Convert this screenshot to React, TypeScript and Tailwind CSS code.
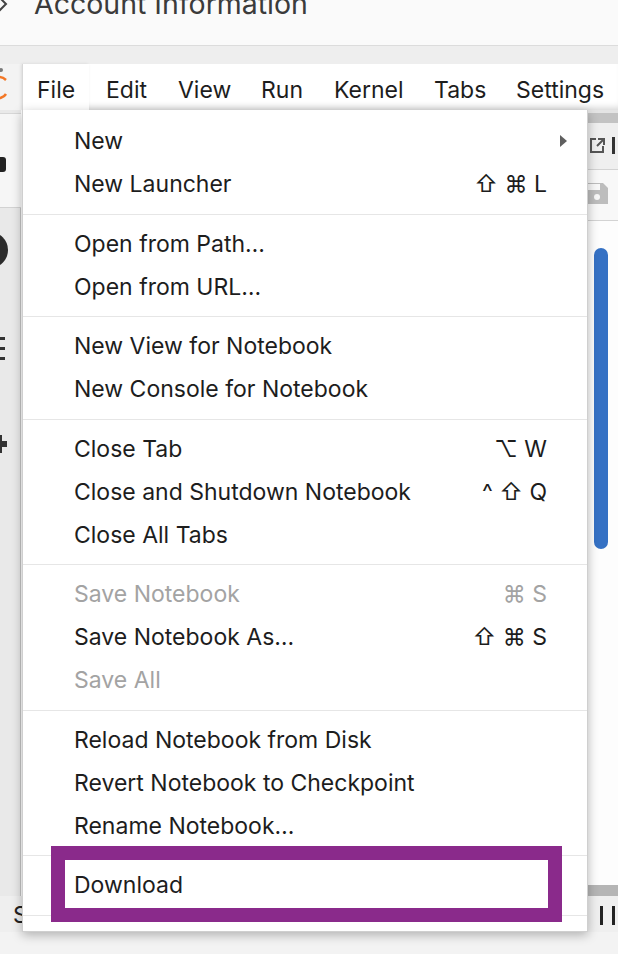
import React from 'react'

type Item = { label: string; shortcut?: string; disabled?: boolean; submenu?: boolean; marked?: boolean }

const groups: Item[][] = [
  [{ label: 'New', submenu: true }, { label: 'New Launcher', shortcut: '⇧ ⌘ L' }],
  [{ label: 'Open from Path…' }, { label: 'Open from URL…' }],
  [{ label: 'New View for Notebook' }, { label: 'New Console for Notebook' }],
  [
    { label: 'Close Tab', shortcut: '⌥ W' },
    { label: 'Close and Shutdown Notebook', shortcut: '^ ⇧ Q' },
    { label: 'Close All Tabs' },
  ],
  [
    { label: 'Save Notebook', shortcut: '⌘ S', disabled: true },
    { label: 'Save Notebook As…', shortcut: '⇧ ⌘ S' },
    { label: 'Save All', disabled: true },
  ],
  [
    { label: 'Reload Notebook from Disk' },
    { label: 'Revert Notebook to Checkpoint' },
    { label: 'Rename Notebook…' },
  ],
  [{ label: 'Download', marked: true }],
]

const menus = [
  { label: 'File', w: 'w-[67px] pl-[14px]', active: true },
  { label: 'Edit', w: 'w-[73px] pl-[17px]' },
  { label: 'View', w: 'w-[83px] pl-[16px]' },
  { label: 'Run', w: 'w-[73px] pl-[16px]' },
  { label: 'Kernel', w: 'w-[100px] pl-[16px]' },
  { label: 'Tabs', w: 'w-[82px] pl-[16px]' },
  { label: 'Settings', w: 'w-[110px] pl-[16px]' },
]

function Separator() {
  return (
    <div className="flex h-[16.5px] items-center">
      <div className="h-px w-full bg-[#e6e6e6]" />
    </div>
  )
}

function MenuRow({ item }: { item: Item }) {
  return (
    <div
      className={`relative flex h-[43px] items-center pl-[51px] pr-[40px] ${
        item.disabled ? 'text-[#a3a3a3]' : 'text-[#1d1d1d]'
      }`}
    >
      <span className="flex-1">{item.label}</span>
      {item.shortcut && <span className="font-['Inter','DejaVu_Sans',sans-serif]">{item.shortcut}</span>}
      {item.submenu && (
        <svg className="absolute right-[20px] top-[15px]" width="7" height="12" viewBox="0 0 7 12">
          <polygon points="0,0 7,6 0,12" fill="#5f5f5f" />
        </svg>
      )}
      {item.marked && (
        <div className="absolute left-[28px] top-[-18px] h-[76px] w-[511px] border-[14px] border-[#8a2a8b]" />
      )}
    </div>
  )
}

function FileMenu() {
  return (
    <div className="absolute left-[22px] top-[110px] z-20 h-[822px] w-[566px] overflow-hidden border border-t-0 border-[#cfcfcf] bg-white pt-[10px] text-[23px] shadow-[0_3px_10px_rgba(0,0,0,0.28)]">
      {groups.map((group, gi) => (
        <div key={gi}>
          {gi > 0 && <Separator />}
          {group.map((item) => (
            <MenuRow key={item.label} item={item} />
          ))}
        </div>
      ))}
      <Separator />
    </div>
  )
}

function SidebarIcons() {
  return (
    <svg width="21" height="786" viewBox="0 0 21 786" className="block">
      <rect x="0" y="3" width="21" height="1" fill="#d6d6d6" />
      <rect x="0" y="4" width="21" height="93" fill="#f6f6f6" />
      <rect x="-8" y="47" width="14" height="15" rx="3" fill="#222" />
      <rect x="0" y="97" width="21" height="1" fill="#d2d2d2" />
      <circle cx="-10" cy="140" r="18" fill="#2b2b2b" />
      <rect x="0" y="227" width="5" height="3" fill="#333" />
      <rect x="0" y="237" width="5" height="3" fill="#333" />
      <rect x="0" y="247" width="5" height="3" fill="#333" />
      <path d="M-4 325 h6 v6 h5 v6 h-5 v6 h-6 z" fill="#333" />
      <rect x="20" y="98" width="1" height="688" fill="#c4c4c4" />
    </svg>
  )
}

export default function App() {
  return (
    <div className="relative h-[954px] w-[618px] overflow-hidden bg-[#f3f3f3] font-['Inter','Liberation_Sans',sans-serif]">
      {/* top header, its title cut by the window edge */}
      <div className="h-[46px] overflow-hidden border-b border-[#dcdcdc] bg-[#fafafa]">
        <div className="mt-[-14px] flex items-center gap-[26px] text-[28.5px] leading-[36px] text-[#3b3b3b]">
          <svg width="10" height="16" viewBox="0 0 10 16" className="ml-[-2px]">
            <path d="M1 1 L8 8 L1 15" stroke="#444" strokeWidth="2" fill="none" />
          </svg>
          <span>Account Information</span>
        </div>
      </div>
      <div className="h-[18px] bg-[#eeeeee]" />

      {/* menu bar */}
      <div className="flex h-[46px]">
        <div className="w-[22px] bg-[#f3f3f3]">
          <svg width="22" height="46" viewBox="0 0 22 46">
            <circle cx="1" cy="6" r="2" fill="#7a7a7a" />
            <path d="M-6 14 A10 8 0 0 1 6 16" stroke="#f37726" strokeWidth="2.5" fill="none" />
            <path d="M-6 34 A10 8 0 0 0 6 30" stroke="#f37726" strokeWidth="2.5" fill="none" />
          </svg>
        </div>
        <div className="flex flex-1 bg-white text-[23px] text-[#1d1d1d] shadow-[inset_0_-7px_7px_-5px_rgba(0,0,0,0.18)]">
          {menus.map((m) => (
            <div
              key={m.label}
              className={`flex h-full shrink-0 items-center pt-[6px] ${m.w} ${
                m.active ? 'relative z-10 border-l border-[#d8d8d8] bg-white shadow-[-1px_0_3px_rgba(0,0,0,0.1)]' : ''
              }`}
            >
              {m.label}
            </div>
          ))}
        </div>
      </div>

      {/* workspace behind the menu */}
      <div className="flex h-[786px]">
        <div className="w-[21px] bg-[#e9e9e9]">
          <SidebarIcons />
        </div>
        <div className="flex-1 bg-white" />
        <div className="flex w-[30px] flex-col bg-white">
          <div className="h-[3px] bg-[#e4e4e4]" />
          <div className="h-[10px] bg-[#c3c3c3]" />
          <div className="relative h-[47px] border-b border-[#d3d3d3] bg-[#efefef]">
            <svg className="absolute left-[1px] top-[14px]" width="16" height="17" viewBox="0 0 16 17">
              <path d="M7 2 H2 V15 H14 V9" stroke="#555" strokeWidth="2" fill="none" />
              <path d="M8 9 L14 3 M9 2 H15 V8" stroke="#555" strokeWidth="2" fill="none" />
            </svg>
            <div className="absolute left-[24px] top-[14px] h-[17px] w-[3px] bg-[#333]" />
          </div>
          <div className="relative h-[51px] border-b border-[#d3d3d3] bg-[#f8f8f8]">
            <svg className="absolute left-[0px] top-[11px]" width="20" height="25" viewBox="0 0 20 25">
              <path d="M0 2 H15 L20 7 V23 H0 Z" fill="#bdbdbd" />
              <rect x="0" y="3" width="12" height="6" fill="#f8f8f8" />
              <circle cx="9" cy="16" r="3" fill="#f8f8f8" />
            </svg>
          </div>
          <div className="flex-1 bg-[#fdfdfd] pl-[6px] pt-[27px]">
            <div className="h-[301px] w-[14px] rounded-full bg-[#3571c4]" />
          </div>
          <div className="h-[11px] bg-[#b5b5b5]" />
        </div>
      </div>

      {/* status bar */}
      <div className="flex h-[36px] items-center justify-between bg-[#efefef] pl-[13px] pr-[3px] pt-[3px] text-[23px] text-[#222]">
        <span>S</span>
        <div className="flex items-center gap-[9px]">
          <div className="h-[19px] w-[3px] bg-[#222]" />
          <div className="h-[19px] w-[3px] bg-[#222]" />
        </div>
      </div>

      <FileMenu />
    </div>
  )
}
